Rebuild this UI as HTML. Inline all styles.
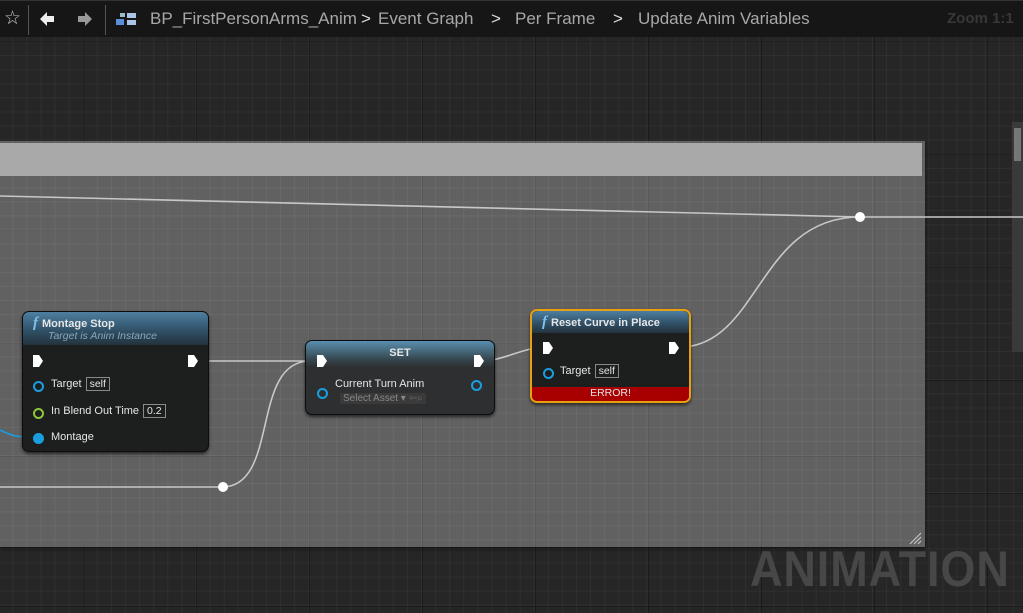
<!DOCTYPE html>
<html><head><style>
*{margin:0;padding:0;box-sizing:border-box}
body{width:1023px;height:613px;overflow:hidden;background:#262626;font-family:"Liberation Sans",sans-serif;position:relative}
.grid{position:absolute;left:0;top:37px;width:1023px;height:576px;
background-image:linear-gradient(90deg,rgba(0,0,0,.3) 1px,transparent 1px),linear-gradient(0deg,rgba(0,0,0,.3) 1px,transparent 1px),linear-gradient(90deg,rgba(255,255,255,.04) 1px,transparent 1px),linear-gradient(0deg,rgba(255,255,255,.04) 1px,transparent 1px);
background-size:113px 113px,113px 113px,14.1px 14.1px,14.1px 14.1px;background-position:-30px 5px}
.top{position:absolute;left:0;top:0;width:1023px;height:37px;background:#161616;border-top:1px solid #333;color:#a8a8a8;font-size:17px}
.top span{position:absolute;top:8px}
.comment{position:absolute;left:0;top:141px;width:925px;height:406px;background:#616161;box-shadow:0 2px 3px rgba(0,0,0,.5);
background-image:linear-gradient(90deg,rgba(0,0,0,.08) 1px,transparent 1px),linear-gradient(0deg,rgba(0,0,0,.08) 1px,transparent 1px),linear-gradient(90deg,rgba(255,255,255,.05) 1px,transparent 1px),linear-gradient(0deg,rgba(255,255,255,.05) 1px,transparent 1px);
background-size:113px 113px,113px 113px,14.1px 14.1px,14.1px 14.1px;background-position:-30px -136px}
.chead{position:absolute;left:0;top:2px;width:922px;height:33px;background:#a9a9a9}
.node{position:absolute;background:#1d1e1e;border-radius:7px;box-shadow:0 2px 3px rgba(0,0,0,.6);color:#e6e6e6;font-size:11px;border:1px solid #0c0c0c}
.nh{height:33px;border-radius:6px 6px 0 0;background:linear-gradient(180deg,#4e7fa0,#2e4d63 60%,#24333d);padding:3px 0 0 10px;font-weight:bold;font-size:11px}
.nh i{font-family:"Liberation Serif",serif;color:#7ec3ea;font-size:15px;margin-right:4px}
.sub{color:#8aa6b8;font-style:italic;font-weight:normal;font-size:10.5px;margin-left:15px;margin-top:-2px}
.abs{position:absolute}
.exec{position:absolute;width:10px;height:12px;background:#fff;clip-path:polygon(0 0,60% 0,100% 50%,60% 100%,0 100%)}
.pin{position:absolute;width:11px;height:11px;border-radius:50%;border:2px solid #1a9ee0}
.box{border:1px solid #8a8a8a;padding:0 3px;font-size:10.5px;margin-left:4px}
</style></head><body>
<div class="grid"></div>
<div class="top">
<span style="left:4px;top:6px;font-size:19px;color:#ccc">☆</span>
<div class="abs" style="left:28px;top:4px;width:1px;height:30px;background:#555"></div>
<svg class="abs" style="left:39px;top:10px" width="16" height="16"><path d="M1 8 L8 1 V5 H15 V11 H8 V15Z" fill="#eee"/></svg>
<svg class="abs" style="left:77px;top:10px" width="16" height="16"><path d="M15 8 L8 1 V5 H1 V11 H8 V15Z" fill="#999"/></svg>
<div class="abs" style="left:105px;top:4px;width:1px;height:30px;background:#555"></div>
<svg class="abs" style="left:116px;top:11px" width="22" height="16"><rect x="0" y="7" width="8" height="6" fill="#5b8ed8"/><rect x="4" y="1" width="5" height="4" fill="#9bc"/><rect x="11" y="1" width="9" height="5" fill="#aac4e8"/><rect x="11" y="8" width="9" height="5" fill="#aac4e8"/></svg>
<span style="left:150px">BP_FirstPersonArms_Anim</span>
<span style="left:361px;color:#ddd">&gt;</span>
<span style="left:378px">Event Graph</span>
<span style="left:491px;color:#ddd">&gt;</span>
<span style="left:515px">Per Frame</span>
<span style="left:613px;color:#ddd">&gt;</span>
<span style="left:638px">Update Anim Variables</span>
<span style="left:947px;color:#383838;font-weight:bold;font-size:15px;top:9px">Zoom 1:1</span>
</div>
<div class="abs" style="left:1012px;top:122px;width:11px;height:230px;background:#3a3a3a"></div>
<div class="abs" style="left:1014px;top:128px;width:7px;height:33px;background:#777"></div>
<div class="comment"><div class="chead"></div>
<svg class="abs" style="left:908px;top:390px" width="14" height="14"><path d="M2 13L13 2M6 13L13 6M10 13L13 10" stroke="#ccc" stroke-width="1"/></svg>
</div>
<div class="abs" style="left:750px;top:540px;font-size:50px;font-weight:bold;color:#474747;letter-spacing:1px;transform:scaleX(.9);transform-origin:left">ANIMATION</div>
<svg class="abs" style="left:0;top:0" width="1023" height="613">
<g fill="none" stroke="#c8c8c8" stroke-width="1.6">
<path d="M0 196 L860 217 L1023 217"/>
<path d="M205 361 L310 361"/>
<path d="M488 361 C510 357 520 350 540 347"/>
<path d="M685 347 C760 340 760 217 860 217"/>
<path d="M0 487 L222 487 C280 487 250 361 310 361"/>
</g>
<path d="M0 430 C10 435 15 437 30 437" stroke="#1a9ee0" stroke-width="1.6" fill="none"/>
<circle cx="860" cy="217" r="5" fill="#fff"/><circle cx="223" cy="487" r="5" fill="#fff"/>
</svg>
<div class="node" style="left:22px;top:311px;width:187px;height:141px">
<div class="nh"><i>f</i>Montage Stop<div class="sub">Target is Anim Instance</div></div>
<div class="exec" style="left:10px;top:43px"></div><div class="exec" style="left:165px;top:43px"></div>
<div class="pin" style="left:10px;top:69px"></div><div class="abs" style="left:28px;top:66px">Target<span class="box">self</span></div>
<div class="pin" style="left:10px;top:96px;border-color:#8fc63a"></div><div class="abs" style="left:28px;top:93px">In Blend Out Time<span class="box">0.2</span></div>
<div class="pin" style="left:10px;top:121px;background:#1a9ee0"></div><div class="abs" style="left:28px;top:119px">Montage</div>
</div>
<div class="node" style="left:305px;top:340px;width:190px;height:75px;background:#2e2f30">
<div style="height:26px;border-radius:6px 6px 0 0;background:linear-gradient(180deg,#5a8fb0,#36474f 70%,#2e2f30);text-align:center;font-weight:bold;padding-top:6px">SET</div>
<div class="exec" style="left:11px;top:14px"></div><div class="exec" style="left:168px;top:14px"></div>
<div class="pin" style="left:11px;top:47px"></div><div class="pin" style="left:165px;top:39px"></div>
<div class="abs" style="left:29px;top:37px">Current Turn Anim</div>
<div class="abs" style="left:34px;top:52px;color:#888;font-size:10px;background:#3a3a3a;padding:0 3px">Select Asset ▾ <span style="color:#666">⇦⌕</span></div>
</div>
<div class="node" style="left:530px;top:309px;width:161px;height:94px;border:2px solid #e8a010;background:#1d1e1e">
<div class="nh" style="height:22px;padding-top:3px"><i>f</i>Reset Curve in Place</div>
<div class="exec" style="left:11px;top:31px"></div><div class="exec" style="left:137px;top:31px"></div>
<div class="pin" style="left:11px;top:57px"></div><div class="abs" style="left:28px;top:54px">Target<span class="box">self</span></div>
<div class="abs" style="left:0;bottom:0;width:157px;height:14px;background:#a80000;text-align:center;font-size:10.5px;border-radius:0 0 5px 5px">ERROR!</div>
</div>
</body></html>
